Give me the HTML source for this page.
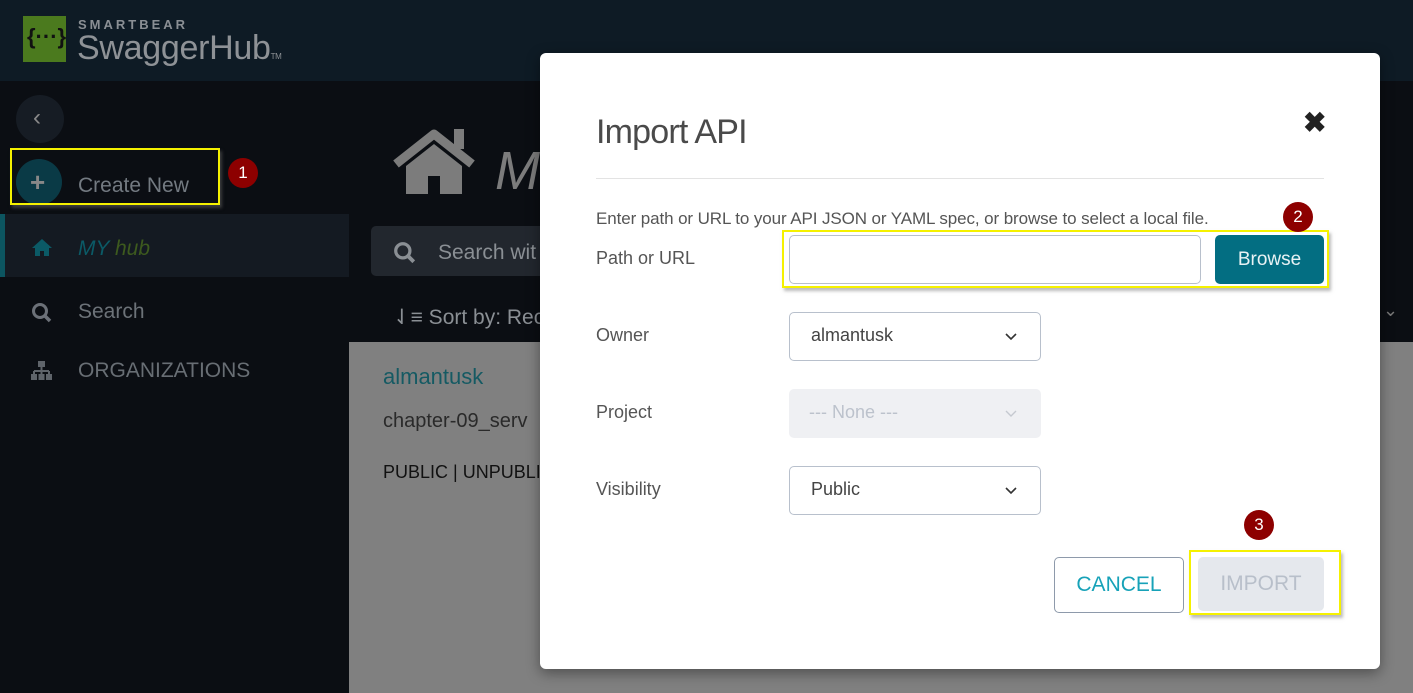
<!DOCTYPE html>
<html><head><meta charset="utf-8">
<style>
*{margin:0;padding:0;box-sizing:border-box}
body{width:1413px;height:693px;overflow:hidden;background:#0b0e13;font-family:"Liberation Sans",sans-serif;position:relative}
.a{position:absolute}
.t{white-space:nowrap}
</style></head><body>
<div class="a" style="left:0;top:0;width:1413px;height:81px;background:#0e1b25"></div>
<div class="a" style="left:23px;top:16px;width:43px;height:46px;background:#4b7a1e"></div>
<div class="a t" style="left:27px;top:24px;font-size:22px;color:#111;font-weight:bold">{···}</div>
<div class="a t" style="left:78px;top:17px;font-size:13px;letter-spacing:3px;color:#8a8f94;font-weight:bold">SMARTBEAR</div>
<div class="a t" style="left:77px;top:29px;font-size:34px;color:#8e9296;letter-spacing:-0.3px">SwaggerHub<span style="font-size:8px">TM</span></div>
<div class="a" style="left:16px;top:95px;width:48px;height:48px;border-radius:50%;background:#161c24"></div>
<div class="a t" style="left:33px;top:104px;font-size:24px;color:#888">‹</div>
<div class="a" style="left:16px;top:159px;width:46px;height:46px;border-radius:50%;background:#0a3a46"></div>
<div class="a t" style="left:30px;top:167px;font-size:26px;color:#888;font-weight:bold">+</div>
<div class="a t" style="left:78px;top:174px;font-size:21px;color:#737a81">Create New</div>
<div class="a" style="left:10px;top:148px;width:210px;height:57px;border:2px solid #f5f100;box-shadow:2px 3px 3px rgba(90,90,90,.6)"></div>
<div class="a" style="left:228px;top:158px;width:30px;height:30px;border-radius:50%;background:#8d0000;color:#fff;font-size:17px;text-align:center;line-height:30px">1</div>
<div class="a" style="left:0;top:214px;width:349px;height:63px;background:#141a22;border-left:5px solid #0c5560"></div>
<svg class="a" style="left:31px;top:238px" width="22" height="18" viewBox="0 0 22 18"><path d="M11 1L1 10h3v8h5v-5h4v5h5v-8h3z" fill="#0b5a66"/></svg>
<div class="a t" style="left:78px;top:237px;font-size:21px;font-style:italic"><span style="color:#0b5a66">MY </span><span style="color:#3d5a1e">hub</span></div>
<svg class="a" style="left:31px;top:302px" width="22" height="22" viewBox="0 0 22 22"><circle cx="9" cy="9" r="6.5" stroke="#6c7178" stroke-width="3" fill="none"/><path d="M14 14l5 5" stroke="#6c7178" stroke-width="3.5"/></svg>
<div class="a t" style="left:78px;top:300px;font-size:21px;color:#6c7278">Search</div>
<svg class="a" style="left:30px;top:361px" width="23" height="20" viewBox="0 0 23 20"><rect x="8" y="0" width="7" height="6" fill="#5f646a"/><path d="M11.5 6v4M4 10h15M4 10v3M11.5 10v3M19 10v3" stroke="#5f646a" stroke-width="2"/><rect x="1" y="13" width="6" height="6" fill="#5f646a"/><rect x="8.5" y="13" width="6" height="6" fill="#5f646a"/><rect x="16" y="13" width="6" height="6" fill="#5f646a"/></svg>
<div class="a t" style="left:78px;top:359px;font-size:21px;color:#686e74">ORGANIZATIONS</div>
<svg class="a" style="left:392px;top:128px" width="84" height="67" viewBox="0 0 84 67"><path d="M4 36L42 6l38 30" stroke="#7c7c7c" stroke-width="9" fill="none" stroke-linejoin="round"/><rect x="62" y="1" width="10" height="20" fill="#7c7c7c"/><path d="M14 38L42 16l28 22v28H48V48H36v18H14z" fill="#7c7c7c"/></svg>
<div class="a t" style="left:495px;top:140px;font-size:54px;color:#7c7c7c;font-style:italic">M</div>
<div class="a" style="left:371px;top:226px;width:200px;height:50px;border-radius:5px;background:#22272e"></div>
<svg class="a" style="left:393px;top:241px" width="24" height="24" viewBox="0 0 22 22"><circle cx="9" cy="9" r="6.5" stroke="#8a8f94" stroke-width="3" fill="none"/><path d="M14 14l5 5" stroke="#8a8f94" stroke-width="3.5"/></svg>
<div class="a t" style="left:438px;top:241px;font-size:21px;color:#8a8f94">Search wit</div>
<div class="a t" style="left:393px;top:305px;font-size:21px;color:#8a8f94">⇃≡ Sort by: Rec</div>
<div class="a" style="left:349px;top:342px;width:1064px;height:351px;background:#808080"></div>
<div class="a" style="left:1380px;top:276px;width:33px;height:66px;background:#0b0e13"></div>
<div class="a t" style="left:1383px;top:300px;font-size:18px;color:#777">⌄</div>
<div class="a t" style="left:383px;top:364px;font-size:22px;color:#155a63">almantusk</div>
<div class="a t" style="left:383px;top:410px;font-size:20px;color:#2a2a2a">chapter-09_serv</div>
<div class="a t" style="left:383px;top:462px;font-size:18px;color:#111">PUBLIC | UNPUBLI</div>
<div class="a" style="left:540px;top:53px;width:840px;height:616px;background:#fff;border-radius:6px;box-shadow:0 4px 14px rgba(0,0,0,.4)"></div>
<div class="a t" style="left:596px;top:113px;font-size:34px;color:#4a4a4a;letter-spacing:-0.8px">Import API</div>
<div class="a t" style="left:1303px;top:106px;font-size:28px;color:#222;font-weight:bold">✖</div>
<div class="a" style="left:596px;top:178px;width:728px;height:1px;background:#e3e3e3"></div>
<div class="a t" style="left:596px;top:209px;font-size:17px;color:#555;letter-spacing:-0.1px">Enter path or URL to your API JSON or YAML spec, or browse to select a local file.</div>
<div class="a t" style="left:596px;top:248px;font-size:18px;color:#555">Path or URL</div>
<div class="a" style="left:782px;top:230px;width:547px;height:58px;border:2px solid #f5f100;box-shadow:2px 3px 3px rgba(120,120,120,.5)"></div>
<div class="a" style="left:789px;top:235px;width:412px;height:49px;border:1px solid #b8c0cc;border-radius:5px;background:#fff"></div>
<div class="a" style="left:1215px;top:235px;width:109px;height:49px;background:#036e82;border-radius:5px;color:#e8f2f4;font-size:19px;text-align:center;line-height:49px">Browse</div>
<div class="a" style="left:1283px;top:202px;width:30px;height:30px;border-radius:50%;background:#8d0000;color:#fff;font-size:17px;text-align:center;line-height:30px">2</div>
<div class="a t" style="left:596px;top:325px;font-size:18px;color:#555">Owner</div>
<div class="a" style="left:789px;top:312px;width:252px;height:49px;border:1px solid #b8c0cc;border-radius:5px"></div>
<div class="a t" style="left:811px;top:325px;font-size:18px;color:#444">almantusk</div>
<svg class="a" style="left:1005px;top:333px" width="12" height="8"><path d="M1 1l5 5 5-5" stroke="#333" stroke-width="1.6" fill="none"/></svg>
<div class="a t" style="left:596px;top:402px;font-size:18px;color:#555">Project</div>
<div class="a" style="left:789px;top:389px;width:252px;height:49px;border-radius:5px;background:#eff0f3"></div>
<div class="a t" style="left:809px;top:402px;font-size:18px;color:#bcc2cc">--- None ---</div>
<svg class="a" style="left:1005px;top:410px" width="12" height="8"><path d="M1 1l5 5 5-5" stroke="#c5c9d0" stroke-width="1.4" fill="none"/></svg>
<div class="a t" style="left:596px;top:479px;font-size:18px;color:#555">Visibility</div>
<div class="a" style="left:789px;top:466px;width:252px;height:49px;border:1px solid #b8c0cc;border-radius:5px"></div>
<div class="a t" style="left:811px;top:479px;font-size:18px;color:#444">Public</div>
<svg class="a" style="left:1005px;top:487px" width="12" height="8"><path d="M1 1l5 5 5-5" stroke="#333" stroke-width="1.6" fill="none"/></svg>
<div class="a" style="left:1054px;top:557px;width:130px;height:56px;border:1px solid #8e9aab;border-radius:5px;color:#17a2b8;font-size:21px;text-align:center;line-height:54px">CANCEL</div>
<div class="a" style="left:1189px;top:550px;width:152px;height:65px;border:2px solid #f5f100;box-shadow:2px 3px 3px rgba(120,120,120,.5)"></div>
<div class="a" style="left:1198px;top:557px;width:126px;height:54px;background:#e5e8ed;border-radius:5px;color:#b8bfca;font-size:21px;text-align:center;line-height:54px">IMPORT</div>
<div class="a" style="left:1244px;top:510px;width:30px;height:30px;border-radius:50%;background:#8d0000;color:#fff;font-size:17px;text-align:center;line-height:30px">3</div>
</body></html>
